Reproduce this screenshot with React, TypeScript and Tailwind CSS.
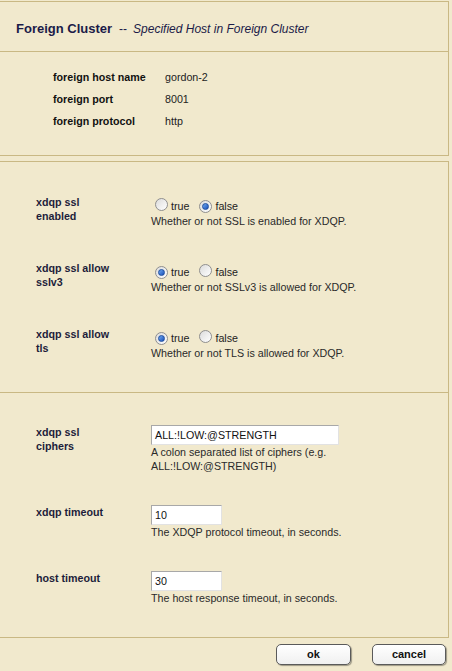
import React from 'react';

const FONT = "font-['Liberation_Sans',Arial,sans-serif]";

function Radio({ checked }: { checked: boolean }) {
  return (
    <span className="inline-flex h-[13px] w-[13px] items-center justify-center rounded-full border border-[#8f8f8f] bg-gradient-to-br from-[#dcdcdc] to-[#ffffff] shrink-0">
      {checked && (
        <span className="h-[7px] w-[7px] rounded-full bg-gradient-to-br from-[#6fa8f0] to-[#1a4fb8] border border-[#1d4ea0]" />
      )}
    </span>
  );
}

function RadioRow({ label, value, desc }: { label: string; value: boolean; desc: string }) {
  return (
    <div className="flex items-start pl-[36px]">
      <div className="w-[115px] pr-[39px] text-[10.7px] leading-[14px] font-bold text-[#1d1d3a]">{label}</div>
      <div className="w-[240px]">
        <div className="mt-[4px] flex h-[15px] items-center text-[10.7px] text-[#222]">
          <span className="ml-[4px]"><Radio checked={value} /></span>
          <span className="ml-[3px]">true</span>
          <span className="ml-[10px]"><Radio checked={!value} /></span>
          <span className="ml-[3px]">false</span>
        </div>
        <div className="text-[10.7px] leading-[14px] text-[#2a2a2a]">{desc}</div>
      </div>
    </div>
  );
}

function FieldRow({ label, value, width, desc }: { label: string; value: string; width: string; desc: string }) {
  return (
    <div className="flex items-start pl-[36px]">
      <div className="w-[115px] pr-[39px] text-[10.7px] leading-[14px] font-bold text-[#1d1d3a]">{label}</div>
      <div className="w-[220px]">
        <div className={`${width} h-[20px] border border-t-[#a8a8a8] border-l-[#a8a8a8] border-r-[#e2e2e2] border-b-[#e2e2e2] bg-white pl-[3px] text-[10.7px] leading-[18px] text-[#111]`}>
          {value}
        </div>
        <div className="text-[10.7px] leading-[14px] text-[#2a2a2a]">{desc}</div>
      </div>
    </div>
  );
}

export default function App() {
  const hostInfo = [
    ['foreign host name', 'gordon-2'],
    ['foreign port', '8001'],
    ['foreign protocol', 'http'],
  ];

  return (
    <div className={`min-h-screen bg-[#f1e9cd] pt-px ${FONT}`}>
      {/* Top panel: title + host info */}
      <div className="w-[449px] border-t border-r border-b border-[#c9b884]">
        <div className="h-[50px] border-b border-[#c9b884] pl-[16px] pt-[18px] leading-4">
          <span className="text-[13px] font-bold text-[#1b1b48]">Foreign Cluster</span>
          <span className="ml-[7px] text-[12px] text-[#1b1b48]">--</span>
          <span className="ml-[6px] text-[12px] italic text-[#1b1b48]">Specified Host in Foreign Cluster</span>
        </div>
        <div className="pl-[53px] pt-[14px] pb-[23px]">
          {hostInfo.map(([k, v]) => (
            <div key={k} className="flex h-[22px] items-center text-[10.7px] leading-[22px]">
              <span className="w-[112px] font-bold text-[#111]">{k}</span>
              <span className="text-[#222]">{v}</span>
            </div>
          ))}
        </div>
      </div>

      {/* Settings panel */}
      <div className="mt-[5px] w-[449px] border-t border-r border-b border-[#c9b884]">
        <div className="flex flex-col gap-[33px] border-b border-[#c9b884] pt-[33px] pb-[32px]">
          <RadioRow label="xdqp ssl enabled" value={false} desc="Whether or not SSL is enabled for XDQP." />
          <RadioRow label="xdqp ssl allow sslv3" value={true} desc="Whether or not SSLv3 is allowed for XDQP." />
          <RadioRow label="xdqp ssl allow tls" value={true} desc="Whether or not TLS is allowed for XDQP." />
        </div>
        <div className="flex flex-col gap-[32px] pt-[32px] pb-[32px]">
          <FieldRow
            label="xdqp ssl ciphers"
            value="ALL:!LOW:@STRENGTH"
            width="w-[188px]"
            desc="A colon separated list of ciphers (e.g. ALL:!LOW:@STRENGTH)"
          />
          <FieldRow label="xdqp timeout" value="10" width="w-[71px]" desc="The XDQP protocol timeout, in seconds." />
          <FieldRow label="host timeout" value="30" width="w-[71px]" desc="The host response timeout, in seconds." />
        </div>
      </div>

      {/* Buttons */}
      <div className="mt-[6px] flex w-[449px] justify-end gap-[21px] pr-[3px]">
        <button className="h-[21px] w-[75px] rounded-[5px] border border-[#5a5a5a] bg-gradient-to-b from-white to-[#f0f0f0] text-[11px] font-bold text-[#111] shadow-[1px_1px_1px_rgba(0,0,0,0.35)]">
          ok
        </button>
        <button className="h-[21px] w-[74px] rounded-[5px] border border-[#5a5a5a] bg-gradient-to-b from-white to-[#f0f0f0] text-[11px] font-bold text-[#111] shadow-[1px_1px_1px_rgba(0,0,0,0.35)]">
          cancel
        </button>
      </div>
    </div>
  );
}
